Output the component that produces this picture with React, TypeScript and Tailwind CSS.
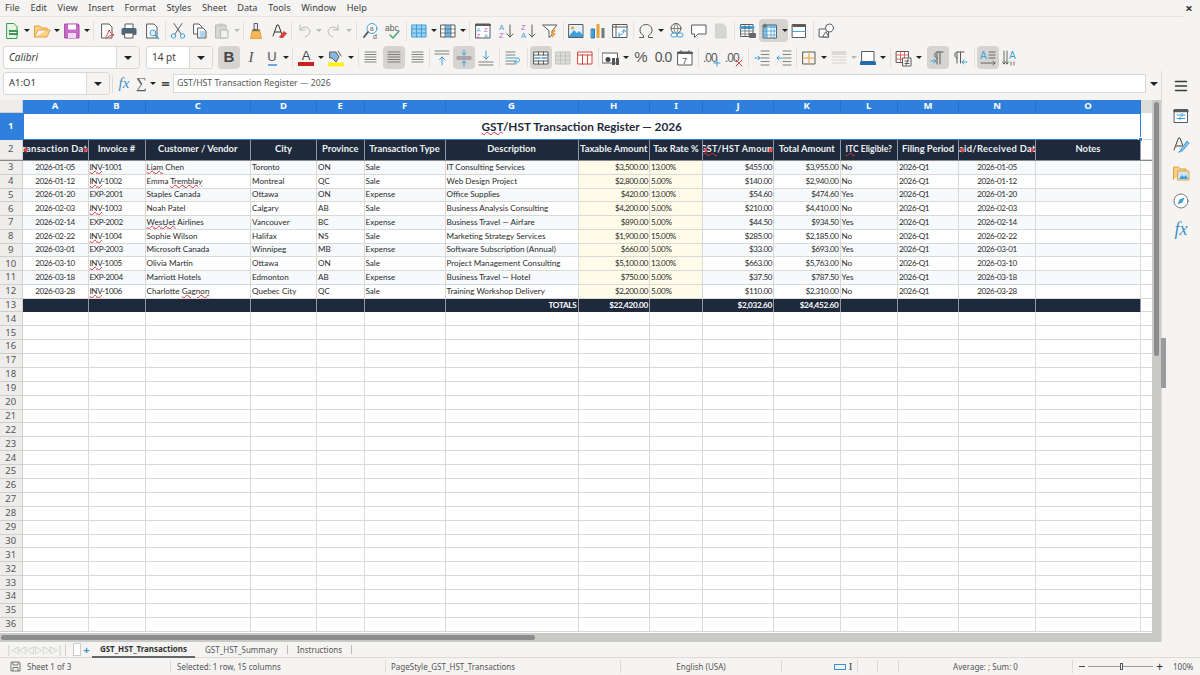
import React from "react";

const UI = "font-['Noto_Sans','Open_Sans',sans-serif]";
const CELL = "font-['Lato','Liberation_Sans',sans-serif]";
const GRID = "grid grid-cols-[22.5px_66px_57px_105.5px_66px_47.5px_81px_133px_71.5px_53px_71px_66.5px_57.5px_61px_77px_105px_11px]";

type P = { children?: React.ReactNode };
const Svg = ({ children }: P) => (
  <svg width="18" height="18" viewBox="0 0 18 18" fill="none" strokeWidth="1" strokeLinecap="round" strokeLinejoin="round">{children}</svg>
);
const G = "#5a5a5a", B = "#3f9fd8", O = "#e8a13a", R = "#d8453c";

const Btn = ({ children, on, muted }: P & { on?: boolean; muted?: boolean }) => (
  <div className={`w-[22px] h-[23px] shrink-0 flex items-center justify-center rounded ${on ? "bg-[#d5d4d1]" : ""} ${muted ? "opacity-40" : ""}`}>{children}</div>
);
const Caret = ({ w = "w-[8px]", light }: { w?: string; light?: boolean }) => (
  <div className={`${w} h-[23px] shrink-0 flex items-center justify-center`}>
    <div className={`w-0 h-0 border-l-[3px] border-r-[3px] border-t-[3px] border-l-transparent border-r-transparent ${light ? "border-t-[#b9b9b9]" : "border-t-[#222]"}`} />
  </div>
);
const Sep = ({ w }: { w: string }) => (
  <div className={`${w} h-[23px] shrink-0 flex items-center justify-center`}><div className="w-px h-[20px] bg-[#e2e1de]" /></div>
);

const Lines = ({ ys, c = "#6a6a6a", x1 = 2, x2 = 16 }: { ys: number[]; c?: string; x1?: number; x2?: number }) => (
  <>{ys.map((y) => <path key={y} d={`M${x1} ${y}H${x2}`} stroke={c} strokeWidth=".85" />)}</>
);
const Table = ({ c = B, fill = "#cfe6f7" }: { c?: string; fill?: string }) => (
  <><rect x="2" y="3" width="14" height="12" fill={fill} stroke={c} /><path d="M2 7H16M2 11H16M6.5 3V15M11.5 3V15" stroke={c} /></>
);
const Doc = () => <path d="M4 2H11L14 5V16H4Z" fill="#fff" stroke={G} />;

const Toolbar1 = () => (
  <div className="flex items-center h-[27px] pl-px shrink-0">
    <Btn><Svg><path d="M4 1.5H11L14 4.5V16.5H4Z" fill="#e6f4e6" stroke="#3b9b52" /><rect x="6" y="8" width="9" height="5" fill="#3b9b52" /><path d="M7 10.5H13" stroke="#fff" /></Svg></Btn><Caret />
    <Btn><Svg><path d="M1.5 15V4H7L8.5 6H14V8H5L1.5 15H14L17 8H14" fill="#fbd38a" stroke={O} /></Svg></Btn><Caret />
    <Btn><Svg><path d="M2 2H15L16 3V16H2Z" fill="#c76bc7" stroke="#a64aa6" /><rect x="5" y="2.5" width="8" height="5" fill="#fff" /><rect x="5" y="11" width="8" height="5" fill="#f4dcf4" /></Svg></Btn><Caret w="w-[7px]" />
    <Sep w="w-[6px]" />
    <Btn><Svg><Doc /><path d="M8 15C10 11 11 9 11 8C12 10 13 12 16 13C13 13 11 14 9 16" stroke={R} /></Svg></Btn>
    <Btn><Svg><path d="M5 6V2H13V6" fill="#fff" stroke={G} /><rect x="1.5" y="6" width="15" height="7" rx="1.5" fill="#4f6678" /><rect x="5" y="11" width="8" height="5" fill="#fff" stroke={G} /></Svg></Btn>
    <div className="w-px shrink-0" />
    <Btn><Svg><Doc /><circle cx="10" cy="11" r="3" fill="#e6f2fa" stroke={B} /><path d="M12.5 13.5L15.5 16.5" stroke={B} strokeWidth="1.5" /></Svg></Btn>
    <Sep w="w-[4px]" />
    <Btn><Svg><path d="M5 1.5L12 12M13 1.5L6 12" stroke={G} /><circle cx="4.5" cy="14" r="2.2" stroke={B} /><circle cx="13.5" cy="14" r="2.2" stroke={B} /></Svg></Btn>
    <Btn><Svg><path d="M3 2H8L11 5V12H3Z" fill="#fff" stroke={G} /><path d="M7 6H12L15 9V16H7Z" fill="#fff" stroke={G} /><Lines ys={[10, 12, 14]} c={B} x1={9} x2={14} /></Svg></Btn>
    <Btn muted><Svg><rect x="3" y="3" width="10" height="13" fill="#aaa" stroke={G} /><rect x="6" y="1.5" width="4" height="3" fill="#888" /><rect x="8" y="8" width="7" height="8" fill="#eee" stroke={G} /></Svg></Btn><Caret w="w-[8px]" light />
    <Sep w="w-[4px]" />
    <Btn><Svg><rect x="7.5" y="1.5" width="3" height="6" fill="#eee" stroke={G} /><rect x="5" y="7.5" width="8" height="2" fill={G} /><path d="M5 9.5L3.5 16.5H14.5L13 9.5Z" fill="#f3b65b" stroke={O} /></Svg></Btn>
    <div className="w-px shrink-0" />
    <Btn><Svg><path d="M3 14L7 3H8.5L12.5 14M4.8 10H10.5" stroke="#333" /><path d="M9 15L14 9L17 11.5L13 16H10Z" fill={R} /></Svg></Btn>
    <Sep w="w-[3px]" />
    <Btn muted><Svg><path d="M5 8C8 4 13 4 15 9C15 12 13 14 10 15M5 3V8H10" stroke={G} /></Svg></Btn><Caret light />
    <Btn muted><Svg><path d="M13 8C10 4 5 4 3 9C3 12 5 14 8 15M13 3V8H8" stroke={G} /></Svg></Btn><Caret light />
    <Sep w="w-[7px]" />
    <Btn><Svg><circle cx="10" cy="6.5" r="5" fill="#fff" stroke={B} /><path d="M6 10L2 15" stroke={G} strokeWidth="2" /><text x="7.7" y="9" fontSize="7" fill={G} fontFamily="Liberation Sans">a</text><text x="11" y="17" fontSize="7" fill={G} fontFamily="Liberation Sans">d</text></Svg></Btn>
    <Btn><Svg><text x="1" y="9" fontSize="8.5" fill={G} fontFamily="Liberation Sans">abc</text><path d="M6 13L9 16L15 9" stroke="#48a868" strokeWidth="1.4" /></Svg></Btn>
    <Sep w="w-[4px]" />
    <Btn><Svg><Table fill="#9fd0f0" /></Svg></Btn><Caret w="w-[7px]" />
    <Btn><Svg><rect x="2" y="3" width="14" height="12" fill="#fff" stroke={G} /><rect x="6" y="3" width="6" height="12" fill={B} opacity=".75" /><path d="M2 7H16M2 11H16M6 3V15M12 3V15" stroke={G} strokeWidth=".7" /></Svg></Btn><Caret w="w-[7px]" />
    <Sep w="w-[6px]" />
    <Btn><Svg><rect x="2" y="2" width="14" height="14" fill="#fff" stroke={G} /><path d="M2 3H16" stroke={G} strokeWidth="2" /><text x="2.5" y="10" fontSize="6" fill={B} fontFamily="Liberation Sans">A</text><text x="2.5" y="16" fontSize="6" fill="#c85cc8" fontFamily="Liberation Sans">Z</text><text x="10" y="10" fontSize="6" fill="#c85cc8" fontFamily="Liberation Sans">Z</text><text x="10" y="16" fontSize="6" fill={B} fontFamily="Liberation Sans">A</text></Svg></Btn>
    <div className="w-px shrink-0" />
    <Btn><Svg><text x="2" y="8" fontSize="7.5" fill={B} fontFamily="Liberation Sans">A</text><text x="2" y="16" fontSize="7.5" fill="#c85cc8" fontFamily="Liberation Sans">Z</text><path d="M13 3V15M10 12L13 15L16 12" stroke={G} /></Svg></Btn>
    <Btn><Svg><text x="2" y="8" fontSize="7.5" fill="#c85cc8" fontFamily="Liberation Sans">Z</text><text x="2" y="16" fontSize="7.5" fill={B} fontFamily="Liberation Sans">A</text><path d="M13 3V15M10 12L13 15L16 12" stroke={G} /></Svg></Btn>
    <Btn><Svg><path d="M2 3H16L11 9V13L8 15.5V9Z" fill="#fff" stroke={G} /><path d="M12 7L15 8L12.5 11L15 11.5L10.5 16.5L11.5 12.5L10 12Z" fill={O} /></Svg></Btn>
    <Sep w="w-[4px]" />
    <Btn><Svg><rect x="2" y="2.5" width="14" height="13" fill="#e6f2fa" stroke={G} /><circle cx="5.5" cy="6" r="1.5" fill={O} /><path d="M2 14L7 8L10 11L12 9L16 13V15H2Z" fill={B} /></Svg></Btn>
    <Btn><Svg><rect x="2.5" y="7" width="3" height="9" fill={B} stroke="#2e7fb5" /><rect x="7.5" y="2" width="3" height="14" fill={O} /><rect x="12.5" y="6" width="3" height="10" fill="#777" /></Svg></Btn>
    <Btn><Svg><rect x="2" y="2.5" width="14" height="13" fill="#fff" stroke={G} /><path d="M2 5H16M5 2.5V15.5" stroke={G} /><path d="M8 13C12 13 13 11 13 8M11 10L13 7.5L15 10M8 11V15" stroke={B} /></Svg></Btn>
    <Sep w="w-[4px]" />
    <Btn><Svg><path d="M2.5 15.5H6.5V13.5C4 12 3 10.5 3 8C3 5 5.5 2.5 9 2.5C12.5 2.5 15 5 15 8C15 10.5 14 12 11.5 13.5V15.5H15.5" stroke={G} /></Svg></Btn><Caret />
    <div className="w-px shrink-0" />
    <Btn><Svg><circle cx="8" cy="6.5" r="5" stroke={G} /><path d="M3 6.5H13M8 1.5C5.5 4 5.5 9 8 11.5C10.5 9 10.5 4 8 1.5" stroke={G} strokeWidth=".7" /><rect x="3" y="11" width="6" height="4" rx="2" fill="#fff" stroke={B} /><rect x="9" y="11" width="6" height="4" rx="2" fill="#fff" stroke={B} /></Svg></Btn>
    <Btn><Svg><path d="M2 3H16V12H8L4.5 15.5V12H2Z" fill="#fff" stroke={G} /></Svg></Btn>
    <Btn muted><Svg><path d="M4 2H11L14 5V16H4Z" fill="#aaa" stroke="#999" /></Svg></Btn>
    <Sep w="w-[5px]" />
    <Btn><Svg><rect x="2" y="2.5" width="12" height="12" fill="#fff" stroke={G} /><path d="M2 5.5H14" stroke={B} strokeWidth="3" /><path d="M2 9H14M2 12H14M6 2.5V14.5M10 2.5V14.5" stroke={G} strokeWidth=".7" /><rect x="10" y="11" width="7" height="5" rx="1" fill="#666" /></Svg></Btn>
    <div className="flex items-center rounded bg-[#d5d4d1] shrink-0">
      <Btn><Svg><rect x="2.5" y="3" width="13" height="13" fill="#fff" stroke={G} /><path d="M2.5 3H15.5V6H6V16H2.5Z" fill={B} opacity=".6" /><path d="M6 6V16M2.5 9H15.5M2.5 13H15.5M10 3V16M13 3V16" stroke={B} strokeWidth=".8" /><path d="M4 2V6M2 4H6" stroke={G} /></Svg></Btn>
      <Caret w="w-[7px]" />
    </div>
    <Btn><Svg><rect x="2.5" y="2.5" width="13" height="13" fill="#fff" stroke={G} /><path d="M2.5 2.5H15.5V5H2.5Z" fill={G} /><path d="M2.5 9.5H15.5" stroke={B} strokeDasharray="2 1" /></Svg></Btn>
    <Sep w="w-[6px]" />
    <Btn><Svg><rect x="1.5" y="7" width="9" height="8" fill="#fff" stroke={G} /><circle cx="11.5" cy="6" r="4" fill="#fff" stroke={G} /><path d="M8 10L11 15H5Z" fill="#fff" stroke={G} /></Svg></Btn>
  </div>
);

const Combo = ({ w, tw, italic, v }: { w: string; tw: string; italic?: boolean; v: string }) => (
  <div className={`${w} h-[23px] shrink-0 flex bg-white border border-[#d9d8d5] rounded-[3px] overflow-hidden`}>
    <div className={`flex-1 pl-[5px] flex items-center text-[10px] text-[#3d3d3d] ${italic ? "italic" : ""}`}>{v}</div>
    <div className={`${tw} bg-[#f5f4f2] border-l border-[#d9d8d5] flex items-center justify-center`}>
      <div className="w-0 h-0 border-l-[4px] border-r-[4px] border-t-[4px] border-l-transparent border-r-transparent border-t-[#222]" />
    </div>
  </div>
);

const Toolbar2 = () => (
  <div className="flex items-center h-[27px] pl-[3px] shrink-0">
    <Combo w="w-[137px]" tw="w-[23px]" italic v="Calibri" />
    <div className="w-[6px] shrink-0" />
    <Combo w="w-[67px]" tw="w-[23px]" v="14 pt" />
    <div className="w-[5px] shrink-0" />
    <Btn on><span className="font-['Liberation_Sans',sans-serif] font-bold text-[15px] text-[#444]">B</span></Btn>
    <Btn><span className="font-['Liberation_Serif',serif] italic text-[15px] text-[#555]">I</span></Btn>
    <div className="w-[20px] h-[23px] shrink-0 flex flex-col items-center justify-center leading-none"><span className="font-['Liberation_Sans',sans-serif] text-[13px] text-[#555]">U</span><div className="w-[9px] h-[2px] bg-[#6fa8dc] mt-px" /></div>
    <Caret />
    <Sep w="w-[5px]" />
    <Btn><div className="flex flex-col items-center leading-none"><span className="font-['Liberation_Sans',sans-serif] text-[13px] text-[#444]">A</span><div className="w-[16px] h-[4px] bg-[#c9211e]" /></div></Btn><Caret />
    <Btn><Svg><path d="M3 3H9L12 8L9 13L5 9H3Z" fill="#8ab8e0" stroke={G} /><path d="M11 2L14 7" stroke={G} /><rect x="1" y="13.5" width="16" height="4" fill="#ffef14" /></Svg></Btn><Caret />
    <Sep w="w-[6px]" />
    <Btn><Svg><Lines ys={[3, 5.5, 8, 10.5, 13]} x1={2} x2={13} /></Svg></Btn>
    <Btn on><Svg><Lines ys={[3, 5.5, 8, 10.5, 13]} x1={3} x2={15} /></Svg></Btn>
    <Btn><Svg><Lines ys={[3, 5.5, 8, 10.5, 13]} x1={5} x2={16} /></Svg></Btn>
    <Sep w="w-[4px]" />
    <Btn><Svg><Lines ys={[2, 5]} /><path d="M9 16V8M6.5 10.5L9 8L11.5 10.5" stroke={B} /></Svg></Btn>
    <Btn on><Svg><Lines ys={[8, 10]} /><path d="M9 1V6M7 4L9 6L11 4M9 17V12M7 14L9 12L11 14" stroke={B} /></Svg></Btn>
    <Btn><Svg><Lines ys={[13, 16]} /><path d="M9 2V10M6.5 7.5L9 10L11.5 7.5" stroke={B} /></Svg></Btn>
    <Sep w="w-[5px]" />
    <Btn><Svg><Lines ys={[3, 6, 12, 15]} x1={2} x2={11} /><path d="M2 9H14C16 9 16 13 14 13H11M12.5 11L10.5 13L12.5 15" stroke={B} /></Svg></Btn>
    <Sep w="w-[6px]" />
    <Btn on><Svg><rect x="2" y="3" width="14" height="12" fill="#fff" stroke={G} /><path d="M2 6H16M2 12H16M6.5 3V6M11.5 3V6M6.5 12V15M11.5 12V15" stroke={G} /><path d="M3 9H8M15 9H10" stroke={B} strokeWidth="1.4" /></Svg></Btn>
    <Btn muted><Svg><Table c="#777" fill="#bbb" /></Svg></Btn>
    <Btn><Svg><rect x="2" y="3" width="14" height="12" fill="#fff" stroke={R} /><path d="M2 6H16M6.5 6V15M11.5 6V15" stroke={R} /></Svg></Btn>
    <Sep w="w-[4px]" />
    <div className="w-[22px] h-[23px] shrink-0 flex items-center justify-center"><Svg><rect x="0.5" y="4" width="15" height="10" fill="#fff" stroke={G} /><circle cx="6" cy="10.5" r="2.5" fill="#444" /><rect x="10" y="9" width="3" height="7" fill="#555" /><rect x="14" y="9" width="3" height="7" fill="#555" /></Svg></div>
    <Caret />
    <Btn><span className="font-['Liberation_Sans',sans-serif] text-[15px] text-[#555]">%</span></Btn>
    <Btn><span className="font-['Liberation_Sans',sans-serif] text-[14px] text-[#555] tracking-[-1px]">0.0</span></Btn>
    <Btn><Svg><rect x="2" y="3" width="14" height="13" fill="#fff" stroke={G} /><path d="M2 4H16" stroke={G} strokeWidth="2" /><path d="M5 1.5V4M13 1.5V4" stroke={G} /><text x="6" y="14.5" fontSize="9.5" fill={G} fontFamily="Liberation Sans">7</text></Svg></Btn>
    <Sep w="w-[5px]" />
    <Btn><Svg><text x="0" y="13" fontSize="12" fill={G} fontFamily="Liberation Sans" letterSpacing="-1">.00</text><path d="M14 11V17M11 14H17" stroke={B} /></Svg></Btn>
    <Btn><Svg><text x="0" y="13" fontSize="12" fill={G} fontFamily="Liberation Sans" letterSpacing="-1">.00</text><path d="M11 11L17 17M17 11L11 17" stroke={R} /></Svg></Btn>
    <Sep w="w-[6px]" />
    <Btn><Svg><Lines ys={[2, 5.5, 9, 12.5, 16]} x1={8} x2={16} /><path d="M2 9H7M5 7L7 9L5 11" stroke={B} /></Svg></Btn>
    <Btn><Svg><Lines ys={[2, 5.5, 9, 12.5, 16]} x1={8} x2={16} /><path d="M7 9H2M4 7L2 9L4 11" stroke={B} /></Svg></Btn>
    <Sep w="w-[3px]" />
    <Btn><Svg><rect x="3" y="3" width="12" height="12" stroke={G} /><path d="M9 3V15M3 9H15" stroke={O} /></Svg></Btn><Caret />
    <Btn muted><Svg><path d="M2 3H16M2 5H16" stroke="#777" /><Lines ys={[8, 11, 14]} c="#999" /></Svg></Btn><Caret w="w-[7px]" light />
    <Btn><Svg><rect x="3" y="2.5" width="12" height="10" fill="#fff" stroke={G} /><rect x="1" y="12.5" width="16" height="3.5" fill="#1f6fb5" /></Svg></Btn><Caret />
    <Sep w="w-[6px]" />
    <Btn><Svg><rect x="1.5" y="2.5" width="12" height="11" fill="#fff" stroke={G} /><path d="M1.5 6H13.5M1.5 10H13.5M5.5 2.5V13.5M9.5 2.5V13.5" stroke={R} strokeWidth=".8" /><rect x="8" y="9" width="8" height="8" fill="#fff" stroke={G} /><path d="M10 12H14M10 14.5H14M13 10.5L11 16" stroke={G} /></Svg></Btn><Caret w="w-[7px]" />
    <div className="w-[5px] shrink-0" />
    <Btn on><Svg><path d="M8 15V3H14M11 3V15M8 3C5 3 5 9 8 9" stroke={G} /><path d="M2 12H7M5 10L7 12L5 14" stroke={B} /></Svg></Btn>
    <Btn><Svg><path d="M6 14V3H13M9.5 3V14M6 3C3 3 3 9 6 9" stroke={G} /><path d="M16 13H11M13 11L11 13L13 15" stroke={B} /></Svg></Btn>
    <Sep w="w-[6px]" />
    <Btn on><Svg><text x="1" y="9.5" fontSize="10" fill={B} fontFamily="Liberation Sans">A</text><path d="M10 3H16M10 6H16M10 9H16M2 14H16M14 12L16 14L14 16" stroke={G} strokeWidth=".9" /></Svg></Btn>
    <Btn><Svg><text x="8" y="10" fontSize="10" fill={B} fontFamily="Liberation Sans">A</text><path d="M3 2V15M6 2V15M1.5 13L3 15L4.5 13M4.5 13L6 15L7.5 13M10 13V16M13 13V16" stroke={G} strokeWidth=".9" /></Svg></Btn>
  </div>
);

const FormulaBar = () => (
  <div className="flex items-center h-[25px] pl-[3px] shrink-0">
    <div className="w-[107px] h-[23px] shrink-0 flex bg-white border border-[#d9d8d5] rounded-[3px] overflow-hidden">
      <div className="flex-1 pl-[5px] flex items-center text-[9.5px] text-[#333]">A1:O1</div>
      <div className="w-[23px] bg-[#f5f4f2] border-l border-[#d9d8d5] flex items-center justify-center">
        <div className="w-0 h-0 border-l-[4px] border-r-[4px] border-t-[4px] border-l-transparent border-r-transparent border-t-[#222]" />
      </div>
    </div>
    <div className="w-[2px] shrink-0" />
    <div className="w-px h-[18px] bg-[#dddcd9] shrink-0" />
    <div className="w-px shrink-0" />
    <div className="w-[20px] flex items-center justify-center font-['Liberation_Serif',serif] italic text-[15px] text-[#3f8fc8] shrink-0">fx</div>
    <div className="w-[14px] flex items-center justify-center text-[#555] text-[15px] font-['Liberation_Serif',serif] shrink-0">∑</div>
    <Caret w="w-[10px]" />
    <div className="w-[15px] flex items-center justify-center text-[#444] text-[15px] font-bold shrink-0">=</div>
    <div className="w-[973px] h-[19px] bg-white border border-[#d9d8d5] pl-[3px] flex items-center text-[8.7px] text-[#555] shrink-0">GST/HST Transaction Register — 2026</div>
    <div className="flex-1 flex justify-center"><div className="w-0 h-0 border-l-[4px] border-r-[4px] border-t-[4px] border-l-transparent border-r-transparent border-t-[#222]" /></div>
  </div>
);

const Sp = ({ children }: P) => <span className="underline decoration-wavy decoration-[#d8333a] decoration-[0.7px] underline-offset-[0px]">{children}</span>;

const rows: React.ReactNode[][] = [
  ["2026-01-05", <><Sp>INV</Sp>-1001</>, <><Sp>Liam</Sp> Chen</>, "Toronto", "ON", "Sale", "IT Consulting Services", "$3,500.00", "13.00%", "$455.00", "$3,955.00", "No", "2026-Q1", "2026-01-05"],
  ["2026-01-12", <><Sp>INV</Sp>-1002</>, <>Emma <Sp>Tremblay</Sp></>, "Montreal", "QC", "Sale", "Web Design Project", "$2,800.00", "5.00%", "$140.00", "$2,940.00", "No", "2026-Q1", "2026-01-12"],
  ["2026-01-20", "EXP-2001", "Staples Canada", "Ottawa", "ON", "Expense", "Office Supplies", "$420.00", "13.00%", "$54.60", "$474.60", "Yes", "2026-Q1", "2026-01-20"],
  ["2026-02-03", <><Sp>INV</Sp>-1003</>, "Noah Patel", "Calgary", "AB", "Sale", "Business Analysis Consulting", "$4,200.00", "5.00%", "$210.00", "$4,410.00", "No", "2026-Q1", "2026-02-03"],
  ["2026-02-14", "EXP-2002", <><Sp>WestJet</Sp> Airlines</>, "Vancouver", "BC", "Expense", "Business Travel — Airfare", "$890.00", "5.00%", "$44.50", "$934.50", "Yes", "2026-Q1", "2026-02-14"],
  ["2026-02-22", <><Sp>INV</Sp>-1004</>, "Sophie Wilson", "Halifax", "NS", "Sale", "Marketing Strategy Services", "$1,900.00", "15.00%", "$285.00", "$2,185.00", "No", "2026-Q1", "2026-02-22"],
  ["2026-03-01", "EXP-2003", "Microsoft Canada", "Winnipeg", "MB", "Expense", "Software Subscription (Annual)", "$660.00", "5.00%", "$33.00", "$693.00", "Yes", "2026-Q1", "2026-03-01"],
  ["2026-03-10", <><Sp>INV</Sp>-1005</>, "Olivia Martin", "Ottawa", "ON", "Sale", "Project Management Consulting", "$5,100.00", "13.00%", "$663.00", "$5,763.00", "No", "2026-Q1", "2026-03-10"],
  ["2026-03-18", "EXP-2004", "Marriott Hotels", "Edmonton", "AB", "Expense", "Business Travel — Hotel", "$750.00", "5.00%", "$37.50", "$787.50", "Yes", "2026-Q1", "2026-03-18"],
  ["2026-03-28", <><Sp>INV</Sp>-1006</>, <>Charlotte <Sp>Gagnon</Sp></>, "Quebec City", "QC", "Sale", "Training Workshop Delivery", "$2,200.00", "5.00%", "$110.00", "$2,310.00", "No", "2026-Q1", "2026-03-28"],
];
const heads: React.ReactNode[] = ["Transaction Date", "Invoice #", "Customer / Vendor", "City", "Province", "Transaction Type", "Description", "Taxable Amount", "Tax Rate %", <><Sp>GST</Sp>/HST Amount</>, "Total Amount", <><Sp>ITC</Sp> Eligible?</>, "Filing Period", "Paid/Received Date", "Notes"];
const letters = "ABCDEFGHIJKLMNO".split("");
const clipped = [0, 9, 13];
const numeric = [0, 1, 7, 8, 9, 10, 12, 13];

const RowHead = ({ n, sel, h }: { n: number; sel?: boolean; h: string }) => (
  <div className={`${h} flex items-center justify-center text-[9.5px] border-r border-b ${sel ? "bg-[#2f7fdc] text-white font-bold border-[#2f7fdc]" : "bg-[#eeedeb] text-[#555] border-[#cfcfcd]"} ${UI}`}>{n}</div>
);

const Arrow = ({ right }: { right?: boolean }) => (
  <div className={`absolute top-1/2 -mt-[3px] w-0 h-0 border-t-[3px] border-b-[3px] border-t-transparent border-b-transparent ${right ? "right-0 border-l-[4px] border-l-[#e0444c]" : "left-0 border-r-[4px] border-r-[#e0444c]"}`} />
);

const Sheet = () => (
  <div className={`flex-1 min-h-0 overflow-hidden ${CELL}`}>
    <div className={GRID}>
      <div className="h-[13px] bg-[#eeedeb] border-r border-b border-[#cfcfcd]" />
      {letters.map((l) => (
        <div key={l} className={`h-[13px] bg-[#2f7fdc] text-white font-bold text-[9.5px] flex items-center justify-center border-r border-[#2a70c4] ${UI}`}>{l}</div>
      ))}
      <div className="h-[13px] bg-[#dcdcda]" />
    </div>
    <div className={GRID}>
      <RowHead n={1} sel h="h-[27px]" />
      <div className="col-span-15 h-[27px] bg-white border border-[#2f7fdc] flex items-center justify-center text-[#1f2a3c] font-bold text-[11.8px] relative">
        <span><Sp>GST</Sp>/HST Transaction Register — 2026</span>
        <div className="absolute -right-[3px] -bottom-[3px] w-[5px] h-[5px] bg-[#2f7fdc] border border-white" />
      </div>
      <div className="h-[27px] border-b border-[#d8d8d6]" />
    </div>
    <div className={GRID}>
      <RowHead n={2} h="h-[20px]" />
      {heads.map((h, i) => (
        <div key={i} className={`relative h-[20px] pb-[2px] bg-[#1e293b] text-[#eef1f4] font-bold flex items-center justify-center whitespace-nowrap overflow-hidden border-r border-[#8d97a5] ${i === 11 ? "text-[8.6px]" : i === 9 ? "text-[9px] tracking-[0.3px]" : i === 0 || i === 13 ? "text-[9.4px] tracking-[0.3px]" : "text-[9.4px]"}`}>
          <span>{h}</span>
          {clipped.includes(i) && <><Arrow /><Arrow right /></>}
        </div>
      ))}
      <div className="h-[20px] border-b border-[#d8d8d6]" />
    </div>
    <div className="h-px bg-[#8a8a88]" />
    {rows.map((r, ri) => (
      <div key={ri} className={GRID}>
        <RowHead n={ri + 3} h="h-[13.75px]" />
        {r.map((c, ci) => {
          const center = ci === 0 || ci === 13;
          const right = ci === 7 || ci === 9 || ci === 10;
          const tint = ci === 7 || ci === 8;
          const bg = tint ? "bg-[#fefbe8]" : ri % 2 === 0 ? "bg-[#f7fafc]" : "bg-white";
          return (
            <div key={ci} className={`h-[13.75px] ${bg} border-r border-b border-[#d9d9d7] text-[#2b2b2b] text-[8.1px] leading-[11px] flex items-center whitespace-nowrap overflow-hidden px-px ${numeric.includes(ci) ? "tracking-[-0.4px]" : ""} ${center ? "justify-center" : right ? "justify-end" : "justify-start"}`}><span>{c}</span></div>
          );
        })}
        <div className={`h-[13.75px] ${ri % 2 === 0 ? "bg-[#f7fafc]" : "bg-white"} border-r border-b border-[#d9d9d7]`} />
        <div className="h-[13.75px] border-b border-[#d9d9d7]" />
      </div>
    ))}
    <div className={GRID}>
      <RowHead n={13} h="h-[13.8px]" />
      {letters.map((l, i) => (
        <div key={l} className="h-[13.8px] bg-[#1e293b] border-r border-[#8d97a5] text-white font-bold text-[8.2px] tracking-[-0.3px] flex items-center justify-end px-px whitespace-nowrap">
          {i === 6 ? "TOTALS" : i === 7 ? "$22,420.00" : i === 9 ? "$2,032.60" : i === 10 ? "$24,452.60" : ""}
        </div>
      ))}
      <div className="h-[13.8px] border-b border-[#d9d9d7]" />
    </div>
    {Array.from({ length: 23 }, (_, i) => (
      <div key={i} className={GRID}>
        <RowHead n={i + 14} h="h-[13.9px]" />
        {Array.from({ length: 16 }, (_, j) => (
          <div key={j} className={`h-[13.9px] border-b border-[#d9d9d7] ${j < 15 ? "border-r" : ""}`} />
        ))}
      </div>
    ))}
  </div>
);

const SideIcon = ({ children, mb }: P & { mb: string }) => <div className={`w-[38px] flex items-center justify-center ${mb}`}>{children}</div>;

const Sidebar = () => (
  <div className="w-[39px] shrink-0 border-l border-[#dcdbd8] pt-[6px] flex flex-col relative">
    <SideIcon mb="mb-[12px]"><Svg><path d="M3.5 4.5H14.5M3.5 9H14.5M3.5 13.5H14.5" stroke="#3a3a3a" strokeWidth="1.4" /></Svg></SideIcon>
    <SideIcon mb="mb-[11px]"><Svg><rect x="2.5" y="2.5" width="13" height="13" fill="#fff" stroke={G} /><path d="M2.5 4H15.5" stroke={G} strokeWidth="2.4" /><path d="M5 8H13M5 11.5H13" stroke={B} /><path d="M10 6.5V9.5M8 10V13" stroke={B} /></Svg></SideIcon>
    <SideIcon mb="mb-[10px]"><Svg><path d="M2 14L6.5 2H8L11 10M4 10H10" stroke="#444" /><path d="M7 16C9 15 9 13 10 12L15 5L17 7L12 13C11 14 10 16 7 16Z" fill="#8fc0e6" stroke={B} /></Svg></SideIcon>
    <SideIcon mb="mb-[10px]"><Svg><path d="M1.5 15.5V3H6.5L8 5H14V7" fill="#f8cf88" stroke={O} /><rect x="6" y="7" width="11" height="9" fill="#cfe6f7" stroke={O} /><path d="M7 15L10 11L12 13L14 11L16 15Z" fill={B} /></Svg></SideIcon>
    <SideIcon mb="mb-[10px]"><Svg><circle cx="9" cy="9" r="7" fill="#fff" stroke="#777" /><path d="M12.5 5.5L10.5 10.5L5.5 12.5L7.5 7.5Z" fill={B} /></Svg></SideIcon>
    <SideIcon mb=""><span className="font-['Liberation_Serif',serif] italic text-[18px] text-[#3f8fc8] leading-[18px]">fx</span></SideIcon>
    <div className="absolute -left-[1px] top-[267px] w-[5px] h-[50px] bg-[#9a9a9a]" />
  </div>
);

const Bar = () => <div className="w-px h-[13px] bg-[#dcdbd8] shrink-0" />;

export default function App() {
  return (
    <div className={`w-[1200px] h-[675px] bg-[#f5f4f2] flex flex-col overflow-hidden text-[#3d3d3d] ${UI}`}>
      <div className="h-[17px] shrink-0 flex items-stretch">
        <div className="flex-1 flex items-center pl-[5px] text-[9.2px] gap-[10.7px] border-b border-[#e6e5e2]">
          {["File", "Edit", "View", "Insert", "Format", "Styles", "Sheet", "Data", "Tools", "Window", "Help"].map((m) => <span key={m}>{m}</span>)}
        </div>
        <div className="w-[17px] flex items-center justify-center text-[13px] leading-[17px] text-[#333] font-bold pr-[5px]">×</div>
      </div>
      <Toolbar1 />
      <Toolbar2 />
      <div className="flex flex-1 min-h-0">
        <div className="flex-1 min-w-0 flex flex-col">
          <FormulaBar />
          <div className="h-[4px] shrink-0" />
          <div className="flex flex-1 min-h-0 bg-white">
            <div className="flex-1 min-w-0 flex flex-col">
              <Sheet />
            </div>
            <div className="w-[9px] shrink-0 bg-[#c9c9c7] pt-[2px] flex justify-center"><div className="w-[5px] h-[254px] rounded-[3px] bg-[#8c8c8c]" /></div>
          </div>
          <div className="h-[9px] shrink-0 bg-[#c9c9c7] pl-[1px] pr-[11px] flex items-center"><div className="w-[534px] h-[5px] rounded-[3px] bg-[#8c8c8c]" /></div>
        </div>
        <Sidebar />
      </div>
      <div className="h-[16px] shrink-0 flex items-center text-[8px] border-b border-[#dcdbd8]">
        <div className="w-[65px] pl-[6px] text-[#c8c8c6] text-[10px] tracking-[-1px] whitespace-nowrap">|◁◁ ◁ ▷ ▷▷|</div>
        <div className="w-px h-[12px] bg-[#d0cfcc] mr-[7px]" />
        <div className="w-[8px] h-[13px] bg-white border border-[#ccc]" />
        <div className="text-[#3f8fc8] text-[11px] font-bold w-[11px] text-center leading-none">+</div>
        <div className="w-[103px] h-[16px] flex items-center justify-center font-bold text-[#333] border-b-2 border-[#666]">GST_HST_Transactions</div>
        <div className="ml-[10px] w-[73px] text-[#555] whitespace-nowrap">GST_HST_Summary</div>
        <div className="w-px h-[9px] bg-[#bbb] mx-[9px]" />
        <div className="w-[44px] text-[#555]">Instructions</div>
        <div className="w-px h-[9px] bg-[#bbb] ml-[10px]" />
      </div>
      <div className="h-[17px] shrink-0 flex items-center text-[8px] text-[#555] whitespace-nowrap">
        <div className="w-[27px] flex justify-center pl-[3px]"><svg width="11" height="11" viewBox="0 0 11 11" fill="none"><path d="M1 1H9L10 2V10H1Z" stroke="#777" /><path d="M3 1V4H8V1M3 10V6.5H8V10" stroke="#777" /></svg></div>
        <div className="w-[143px]">Sheet 1 of 3</div>
        <Bar />
        <div className="w-[214px] pl-[6px]">Selected: 1 row, 15 columns</div>
        <Bar />
        <div className="w-[234px] pl-[5px]">PageStyle_GST_HST_Transactions</div>
        <Bar />
        <div className="w-[160px] text-center">English (USA)</div>
        <Bar />
        <div className="w-[52px]" />
        <div className="w-[12px] h-[6px] border border-[#3f8fc8] bg-[#eaf3fa]" />
        <div className="w-[7px] text-[11px] leading-none text-center text-[#444] ml-[1px] font-['Liberation_Serif',serif]">I</div>
        <div className="w-[3px]" />
        <Bar />
        <div className="w-[19px]" />
        <Bar />
        <div className="w-[20px]" />
        <Bar />
        <div className="w-[173px] text-center">Average: ; Sum: 0</div>
        <Bar />
        <div className="w-[6px]" />
        <div className="w-[84px] flex items-center">
          <div className="w-[6px] h-[1.5px] bg-[#444]" />
          <div className="flex-1 mx-[3px] h-px bg-[#999] relative"><div className="absolute left-1/2 -top-[3px] -ml-[1px] w-[3px] h-[7px] border border-[#555] bg-white" /></div>
          <div className="text-[12px] leading-none text-[#333]">+</div>
        </div>
        <div className="ml-[10px]">100%</div>
      </div>
    </div>
  );
}
